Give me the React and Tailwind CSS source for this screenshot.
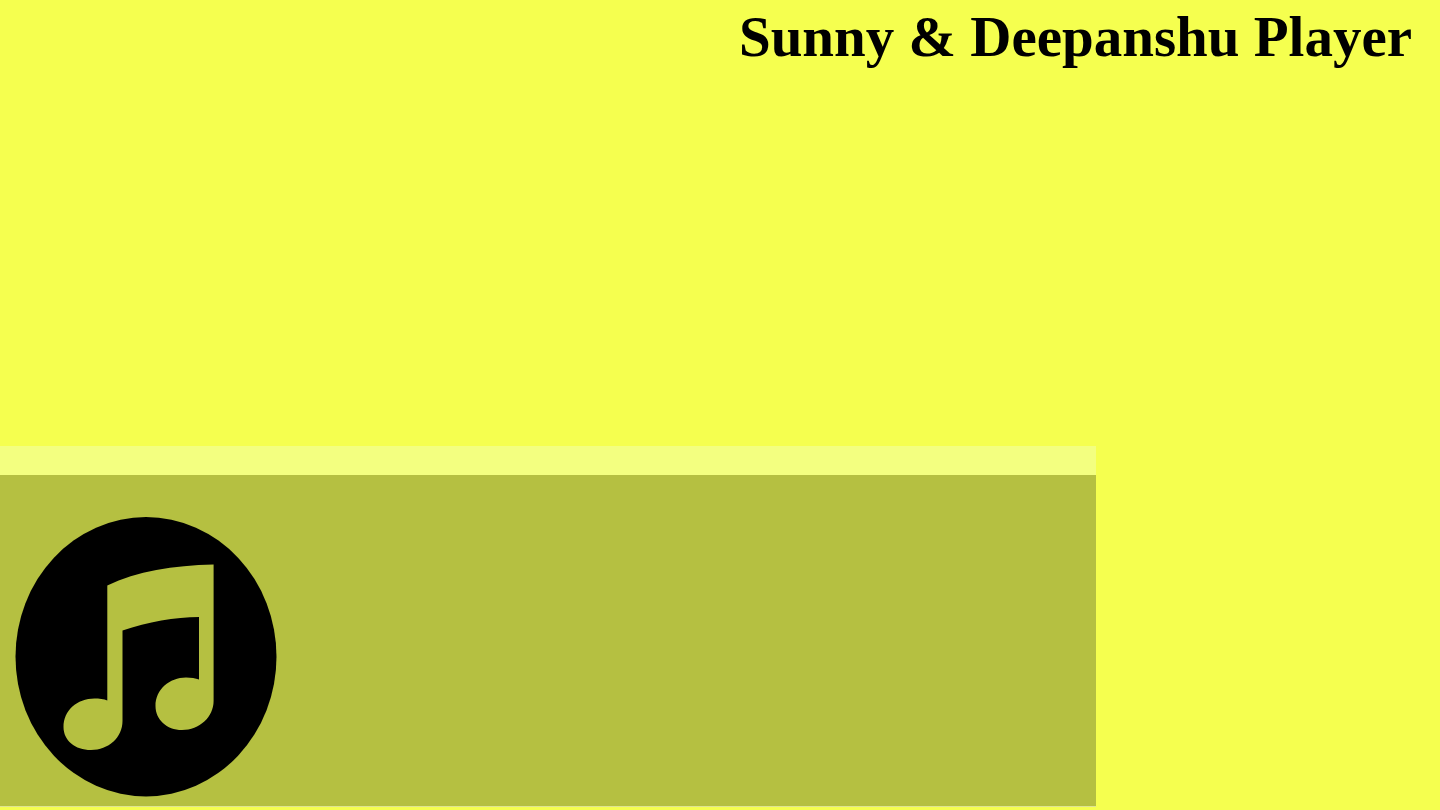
function MusicBadge() {
  return (
    <svg
      viewBox="0 0 262 280"
      className="block h-[280px] w-[262px]"
      role="img"
      aria-label="Music"
    >
      <ellipse cx="131" cy="139.7" rx="130.5" ry="139.7" fill="#000000" />
      <path
        d="M92.3 68.5 C122 54 158 48.5 198.6 47.5 V184 C198.6 200 184.5 213 167 213 C151.5 213 140.5 202.5 140.5 189 C140.5 172.5 154.5 160.5 171 160.5 C176 160.5 180.5 161.2 184 162.5 V100 C160 100 133 105 107.5 113.5 V204 C107.5 220.5 93.5 233 76 233 C60 233 48.5 223.5 48.5 210 C48.5 193.5 62 181.5 79.5 181.5 C84 181.5 89 182 92.3 183.5 Z"
        fill="#b5c041"
      />
    </svg>
  );
}

export default function App() {
  return (
    <div className="flex min-h-screen flex-col bg-[#f5ff4f] font-['Liberation_Serif',serif] text-black">
      <header className="flex justify-end px-7">
        <h1 className="text-right text-[57px] leading-[74px] font-bold">
          Sunny &amp; Deepanshu Player
        </h1>
      </header>
      <main className="mt-auto w-[76.1%] pb-[3px]">
        <div className="h-[29px] bg-[#f3ff80]" />
        <section className="border-b border-[#dfe591] bg-[#b5c041] px-[15px] pt-[42px] pb-[9px]">
          <MusicBadge />
        </section>
      </main>
    </div>
  );
}
